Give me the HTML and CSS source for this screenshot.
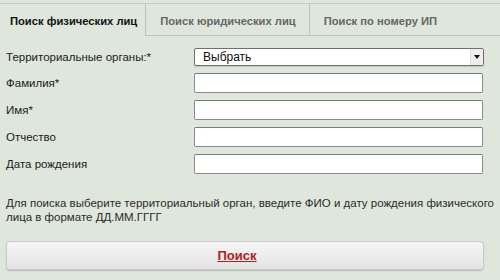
FILE: index.html
```html
<!DOCTYPE html>
<html lang="ru">
<head>
<meta charset="utf-8">
<title>Поиск</title>
<link rel="stylesheet" href="styles.css">
</head>
<body>
<div class="page">
  <div class="tabs">
    <div class="tab active">Поиск физических лиц</div>
    <div class="tab">Поиск юридических лиц</div>
    <div class="tab last">Поиск по номеру ИП</div>
  </div>
  <div class="form">
    <div class="row">
      <label class="label">Территориальные органы:*</label>
      <div class="select"><span class="select-text">Выбрать</span><span class="arrow"><span class="tri"></span></span></div>
    </div>
    <div class="row">
      <label class="label">Фамилия*</label>
      <div class="input"></div>
    </div>
    <div class="row">
      <label class="label">Имя*</label>
      <div class="input"></div>
    </div>
    <div class="row">
      <label class="label">Отчество</label>
      <div class="input"></div>
    </div>
    <div class="row">
      <label class="label">Дата рождения</label>
      <div class="input"></div>
    </div>
  </div>
  <p class="hint">Для поиска выберите территориальный орган, введите ФИО и дату рождения физического лица в формате ДД.ММ.ГГГГ</p>
  <div class="actions">
    <button class="btn" type="button"><span class="btn-text">Поиск</span></button>
  </div>
</div>
</body>
</html>
```
FILE: styles.css
```css
html, body {
  margin: 0;
  padding: 0;
  background: #dfe7dc;
}
body {
  font-family: "Liberation Sans", Arial, sans-serif;
  font-size: 11.5px;
  color: #1a1a1a;
  width: 500px;
  height: 280px;
  overflow: hidden;
}
.page {
  padding-top: 3px;
}
.tabs {
  display: flex;
  border-top: 1px solid #c4cfc1;
  height: 32px;
}
.tab {
  display: flex;
  align-items: center;
  font-weight: bold;
  font-size: 11.2px;
  color: #666;
  padding: 3px 13px 0 14px;
  border-left: 1px solid #b9c6b5;
  border-bottom: 1px solid #b9c6b5;
}
.tab.active {
  color: #111;
  border-left: none;
  border-bottom-color: transparent;
  padding: 3px 8px 0 10px;
}
.tab.last {
  flex: 1;
}
.form {
  display: flex;
  flex-direction: column;
  gap: 7px;
  padding: 12px 16px 0 6px;
}
.row {
  display: grid;
  grid-template-columns: 188px 1fr;
  align-items: center;
}
.label {
  color: #1a1a1a;
}
.select {
  height: 18px;
  box-sizing: border-box;
  border: 1px solid #6f6f6f;
  border-radius: 2px;
  background: #fff;
  display: flex;
  align-items: center;
  justify-content: space-between;
  box-shadow: 0 1px 1px rgba(0,0,0,0.15);
}
.select-text {
  padding-left: 8px;
  color: #111;
  font-size: 12px;
}
.arrow {
  width: 12px;
  height: 16px;
  background: #eeeeee;
  border-left: 1px solid #e0e0e0;
  display: flex;
  align-items: center;
  justify-content: center;
}
.tri {
  width: 0;
  height: 0;
  border-left: 3px solid transparent;
  border-right: 3px solid transparent;
  border-top: 4px solid #111;
}
.input {
  height: 20px;
  box-sizing: border-box;
  margin-right: 1px;
  border: 1px solid #8a8a8a;
  border-top-color: #7a7a7a;
  border-radius: 2px;
  background: #fff;
}
.hint {
  margin: 22px 4px 0 6px;
  line-height: 14px;
  color: #2a2a2a;
}
.actions {
  padding: 17px 16px 0 6px;
}
.btn {
  width: 100%;
  height: 29px;
  border: 1px solid #c9c9c9;
  border-radius: 4px;
  background: linear-gradient(#f6f6f6, #e3e3e3);
  box-shadow: 0 1px 1px rgba(0,0,0,0.2);
  font-family: "Liberation Sans", Arial, sans-serif;
  padding: 0 16px 0 0;
  cursor: pointer;
}
.btn-text {
  font-size: 13px;
  font-weight: bold;
  color: #b01c22;
  text-decoration: underline;
}
```
